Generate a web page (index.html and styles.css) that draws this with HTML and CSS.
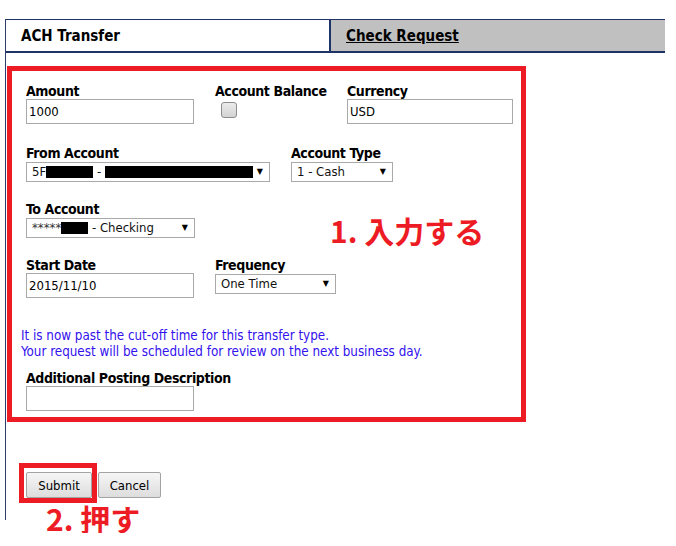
FILE: index.html
```html
<!DOCTYPE html>
<html lang="en">
<head>
<meta charset="utf-8">
<title>ACH Transfer</title>
<link rel="stylesheet" href="styles.css">
</head>
<body>
<div class="page">
  <div class="tabs">
    <div class="tab tab-active">ACH Transfer</div>
    <div class="tab tab-other"><a href="#" class="tab-link">Check Request</a></div>
  </div>

  <div class="form-box">
    <div class="row row-first">
      <div class="field col-a">
        <label class="lbl">Amount</label>
        <input class="text w-168" type="text" value="1000">
      </div>
      <div class="field col-b">
        <label class="lbl">Account Balance</label>
        <span class="check"></span>
      </div>
      <div class="field">
        <label class="lbl">Currency</label>
        <input class="text w-166" type="text" value="USD">
      </div>
    </div>

    <div class="row row-gap21">
      <div class="field col-from">
        <label class="lbl">From Account</label>
        <div class="select w-244">
          <span class="sel-text">5F<span class="redact r-from1"></span> - <span class="redact r-from2"></span></span>
          <span class="arrow">▼</span>
        </div>
      </div>
      <div class="field">
        <label class="lbl">Account Type</label>
        <div class="select w-102">
          <span class="sel-text">1 - Cash</span>
          <span class="arrow">▼</span>
        </div>
      </div>
    </div>

    <div class="row row-gap19">
      <div class="field col-to">
        <label class="lbl">To Account</label>
        <div class="select w-169">
          <span class="sel-text"><span class="stars">*****</span><span class="redact r-to"></span> - Checking</span>
          <span class="arrow">▼</span>
        </div>
      </div>
      <div class="note note-one">1. 入力する</div>
    </div>

    <div class="row row-gap19">
      <div class="field col-a">
        <label class="lbl">Start Date</label>
        <input class="text w-168" type="text" value="2015/11/10">
      </div>
      <div class="field">
        <label class="lbl">Frequency</label>
        <div class="select w-121">
          <span class="sel-text">One Time</span>
          <span class="arrow">▼</span>
        </div>
      </div>
    </div>

    <p class="message">It is now past the cut-off time for this transfer type.<br>Your request will be scheduled for review on the next business day.</p>

    <div class="row row-gap10">
      <div class="field">
        <label class="lbl">Additional Posting Description</label>
        <input class="text w-168" type="text" value="">
      </div>
    </div>
  </div>

  <div class="actions">
    <span class="highlight"><button class="btn btn-submit" type="button">Submit</button></span>
    <button class="btn btn-cancel" type="button">Cancel</button>
  </div>
</div>
<div class="note note-two">2. 押す</div>
</body>
</html>
```

FILE: styles.css
```css
html, body {
  margin: 0;
  padding: 0;
  background: #ffffff;
}

body {
  font-family: "DejaVu Sans Condensed", "DejaVu Sans", sans-serif;
  color: #000;
}

.page {
  margin: 19px 0 0 5px;
  width: 660px;
  padding-bottom: 17px;
  border-left: 1px solid #2a3d6b;
  box-sizing: border-box;
}

/* Tabs */
.tabs {
  display: flex;
  height: 34px;
  border-top: 1px solid #1f3466;
  border-bottom: 2px solid #1f3466;
  box-sizing: border-box;
}

.tab {
  font-size: 15px;
  font-weight: bold;
  line-height: 29px;
  padding-top: 2px;
  box-sizing: border-box;
}

.tab-active {
  width: 323px;
  padding-left: 15px;
  background: #ffffff;
}

.tab-other {
  flex: 1;
  background: #c0c0c0;
  border-left: 2px solid #1f3466;
  padding-left: 15px;
}

.tab-link {
  color: #000;
  text-decoration: underline;
}

/* Red annotated form area */
.form-box {
  margin: 13px 0 0 1px;
  width: 519px;
  border: 5px solid #ed1c24;
  box-sizing: border-box;
  padding: 12px 0 6px 9px;
}

.row {
  display: flex;
  align-items: flex-start;
  margin-left: 5px;
}

.row-gap21 { margin-top: 21px; }
.row-gap19 { margin-top: 19px; }
.row-gap10 { margin-top: 10px; }

.field {
  display: flex;
  flex-direction: column;
  align-items: flex-start;
}

.col-a { width: 189px; }
.col-b { width: 132px; }
.col-from { width: 265px; }
.col-to { width: 304px; }

.lbl {
  display: block;
  font-size: 14px;
  font-weight: bold;
  line-height: 16px;
  letter-spacing: -0.4px;
  white-space: nowrap;
}

.text {
  height: 25px;
  margin: 0;
  border: 1px solid #a9a9a9;
  box-sizing: border-box;
  padding: 0 2px;
  font-family: "DejaVu Sans Condensed", "DejaVu Sans", sans-serif;
  font-size: 13px;
  color: #000;
  background: #fff;
  outline: none;
}

.w-168 { width: 168px; }
.w-166 { width: 166px; }
.w-244 { width: 244px; }
.w-102 { width: 102px; }
.w-169 { width: 169px; }
.w-121 { width: 121px; }

.check {
  display: block;
  width: 16px;
  height: 16px;
  margin: 3px 0 0 6px;
  border: 1px solid #8e8e8e;
  border-radius: 3px;
  box-sizing: border-box;
  background: linear-gradient(#ebebeb, #d3d3d3);
}

.select {
  display: flex;
  align-items: center;
  justify-content: space-between;
  height: 20px;
  margin-top: 1px;
  border: 1px solid #a9a9a9;
  box-sizing: border-box;
  padding: 0 6px 0 5px;
  font-size: 13px;
  line-height: 18px;
  color: #111;
  background: #fff;
}

.sel-text {
  display: flex;
  align-items: center;
  white-space: pre;
}

.arrow {
  font-family: "DejaVu Sans", sans-serif;
  font-size: 8px;
  color: #000;
}

.redact {
  display: inline-block;
  background: #000;
  height: 12px;
}

.r-from1 { width: 47px; }
.r-from2 { width: 148px; }
.r-to { width: 27px; }

.stars {
  color: #333;
}

.note {
  font-family: "Noto Sans CJK JP", "Noto Sans", sans-serif;
  font-weight: bold;
  font-size: 30px;
  line-height: 30px;
  color: #ed1c24;
  white-space: pre;
}

.note-one {
  margin-top: 14px;
  margin-bottom: -20px;
}

.message {
  margin: 30px 0 0 0;
  font-size: 13.3px;
  line-height: 16px;
  color: #3311ee;
}

/* Buttons */
.actions {
  display: flex;
  align-items: flex-start;
  margin: 41px 0 0 13px;
}

.highlight {
  display: block;
  border: 5px solid #ed1c24;
  padding: 4px 0 0 2px;
}

.btn {
  display: block;
  height: 26px;
  margin: 0;
  border: 1px solid #a3a3a3;
  border-radius: 2px;
  box-sizing: border-box;
  background: linear-gradient(#f6f6f6, #dddddd);
  font-family: "DejaVu Sans Condensed", "DejaVu Sans", sans-serif;
  font-size: 13px;
  color: #000;
  padding: 0;
}

.btn-submit { width: 66px; }

.btn-cancel {
  width: 63px;
  margin: 9px 0 0 1px;
}

.note-two {
  margin: -17px 0 0 46px;
}
```
